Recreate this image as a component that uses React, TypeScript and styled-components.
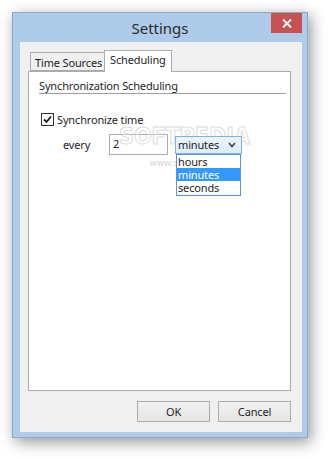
import { createGlobalStyle, styled } from "styled-components";

const GlobalStyle = createGlobalStyle`
    html, body {
        margin: 0;
        padding: 0;
        background: #ffffff;
    }
    body {
        font-family: "Noto Sans", "Open Sans", sans-serif;
        font-size: 11px;
        letter-spacing: -0.15px;
        color: #1e1e1e;
    }
`;

const Stage = styled.div`
    padding: 12px 0 0 12px;
    width: 329px;
    height: 459px;
    box-sizing: border-box;
    overflow: hidden;
`;

const Window = styled.div`
    width: 296px;
    height: 426px;
    box-sizing: border-box;
    border: 1px solid #8ea9c8;
    background: #aecbea;
    box-shadow: 3px 4px 14px rgba(0, 0, 0, 0.42);
    display: flex;
    flex-direction: column;
`;

const TitleBar = styled.div`
    height: 29px;
    display: grid;
    grid-template-columns: 1fr auto 1fr;
    align-items: start;
`;

const Title = styled.div`
    grid-column: 2;
    font-size: 15px;
    letter-spacing: 0;
    line-height: 29px;
    color: #2b2b2b;
    padding-top: 1px;
`;

const CloseButton = styled.div`
    grid-column: 3;
    justify-self: end;
    margin-right: 5px;
    width: 31px;
    height: 20px;
    background: #c75050;
    display: flex;
    align-items: center;
    justify-content: center;
`;

const Client = styled.div`
    flex: 1;
    margin: 0 5px 5px 7px;
    background: #f0f0f0;
    padding: 9px 11px 10px 8px;
    display: flex;
    flex-direction: column;
`;

const TabStrip = styled.div`
    height: 20px;
    display: flex;
    align-items: flex-end;
    padding-left: 2px;
    position: relative;
    z-index: 1;
`;

const Tab = styled.div<{ $active?: boolean }>`
    box-sizing: border-box;
    height: ${(p) => (p.$active ? "22px" : "19px")};
    margin-bottom: ${(p) => (p.$active ? "-1px" : "0")};
    padding: ${(p) => (p.$active ? "1px 5px 0 5px" : "2px 2px 0 4px")};
    border: 1px solid #acacac;
    border-bottom: ${(p) => (p.$active ? "none" : "1px solid #acacac")};
    border-right: ${(p) => (p.$active ? "1px solid #acacac" : "none")};
    background: ${(p) => (p.$active ? "#ffffff" : "#f0f0f0")};
    line-height: 15px;
    white-space: nowrap;
`;

const Pane = styled.div`
    flex: 1;
    background: #ffffff;
    border: 1px solid #acacac;
    padding: 6px 4px 0 10px;
    position: relative;
`;

const Heading = styled.div`
    line-height: 15px;
    border-bottom: 1px solid #a0a0a0;
`;

const CheckRow = styled.label`
    display: flex;
    align-items: center;
    gap: 3px;
    margin: 18px 0 0 2px;
    line-height: 15px;
`;

const CheckBox = styled.span`
    width: 11px;
    height: 11px;
    border: 1px solid #333333;
    background: #ffffff;
    display: flex;
    align-items: center;
    justify-content: center;
`;

const EveryRow = styled.div`
    display: flex;
    align-items: flex-start;
    margin: 7px 0 0 24px;
`;

const EveryLabel = styled.span`
    width: 46px;
    line-height: 21px;
`;

const NumberInput = styled.div`
    box-sizing: border-box;
    width: 59px;
    height: 21px;
    border: 1px solid #abadb3;
    background: #ffffff;
    padding-left: 3px;
    line-height: 18px;
`;

const SelectWrap = styled.div`
    position: relative;
    margin: 2px 0 0 7px;
    z-index: 3;
`;

const SelectBox = styled.div`
    box-sizing: border-box;
    width: 67px;
    height: 18px;
    border: 1px solid #7eb4ea;
    background: linear-gradient(#ecf4fc, #dcecfc);
    display: flex;
    align-items: center;
    justify-content: space-between;
    padding: 0 5px 0 2px;
    line-height: 16px;
`;

const DropList = styled.div`
    position: absolute;
    top: 18px;
    left: 1px;
    width: 65px;
    box-sizing: border-box;
    border: 1px solid #5a93d6;
    background: #ffffff;
    padding: 0 0 1px;
`;

const DropItem = styled.div<{ $selected?: boolean }>`
    line-height: 13px;
    height: 13px;
    padding-left: 1px;
    background: ${(p) => (p.$selected ? "#3399ff" : "transparent")};
    color: ${(p) => (p.$selected ? "#ffffff" : "#1e1e1e")};
`;

const Watermark = styled.div`
    position: absolute;
    left: 90px;
    top: 52px;
    font-family: "DejaVu Sans Condensed", "Liberation Sans Narrow", sans-serif;
    font-weight: bold;
    font-size: 23px;
    line-height: 25px;
    letter-spacing: 0;
    color: rgba(255, 255, 255, 0.4);
    -webkit-text-stroke: 1px rgba(190, 190, 190, 0.55);
    pointer-events: none;
    z-index: 2;
`;

const WatermarkUrl = styled.div`
    position: absolute;
    left: 121px;
    top: 84px;
    font-size: 9px;
    letter-spacing: 0;
    color: rgba(165, 165, 165, 0.5);
    pointer-events: none;
    z-index: 2;
`;

const ButtonRow = styled.div`
    display: flex;
    justify-content: flex-end;
    gap: 8px;
    margin-top: 10px;
`;

const Button = styled.div`
    box-sizing: border-box;
    width: 73px;
    height: 21px;
    border: 1px solid #adadad;
    background: linear-gradient(#f2f2f2, #e5e5e5);
    display: flex;
    align-items: center;
    justify-content: center;
`;

export default function App() {
    return (
        <>
            <GlobalStyle />
            <Stage>
                <Window>
                    <TitleBar>
                        <Title>Settings</Title>
                        <CloseButton>
                            <svg width="10" height="9" viewBox="0 0 10 9">
                                <path d="M1 0.5 L9 8.5 M9 0.5 L1 8.5" stroke="#ffffff" strokeWidth="1.9" />
                            </svg>
                        </CloseButton>
                    </TitleBar>
                    <Client>
                        <TabStrip>
                            <Tab>Time Sources</Tab>
                            <Tab $active>Scheduling</Tab>
                        </TabStrip>
                        <Pane>
                            <Heading>Synchronization Scheduling</Heading>
                            <CheckRow>
                                <CheckBox>
                                    <svg width="9" height="9" viewBox="0 0 9 9">
                                        <path d="M1 4.5 L3.5 7 L8 1.5" stroke="#1a1a1a" strokeWidth="1.8" fill="none" />
                                    </svg>
                                </CheckBox>
                                Synchronize time
                            </CheckRow>
                            <EveryRow>
                                <EveryLabel>every</EveryLabel>
                                <NumberInput>2</NumberInput>
                                <SelectWrap>
                                    <SelectBox>
                                        minutes
                                        <svg width="8" height="6" viewBox="0 0 8 6">
                                            <path d="M1 1 L4 4.5 L7 1" stroke="#444444" strokeWidth="1.6" fill="none" />
                                        </svg>
                                    </SelectBox>
                                    <DropList>
                                        <DropItem>hours</DropItem>
                                        <DropItem $selected>minutes</DropItem>
                                        <DropItem>seconds</DropItem>
                                    </DropList>
                                </SelectWrap>
                            </EveryRow>
                            <Watermark>SOFTPEDIA</Watermark>
                            <WatermarkUrl>www.softpedia.com</WatermarkUrl>
                        </Pane>
                        <ButtonRow>
                            <Button>OK</Button>
                            <Button>Cancel</Button>
                        </ButtonRow>
                    </Client>
                </Window>
            </Stage>
        </>
    );
}
